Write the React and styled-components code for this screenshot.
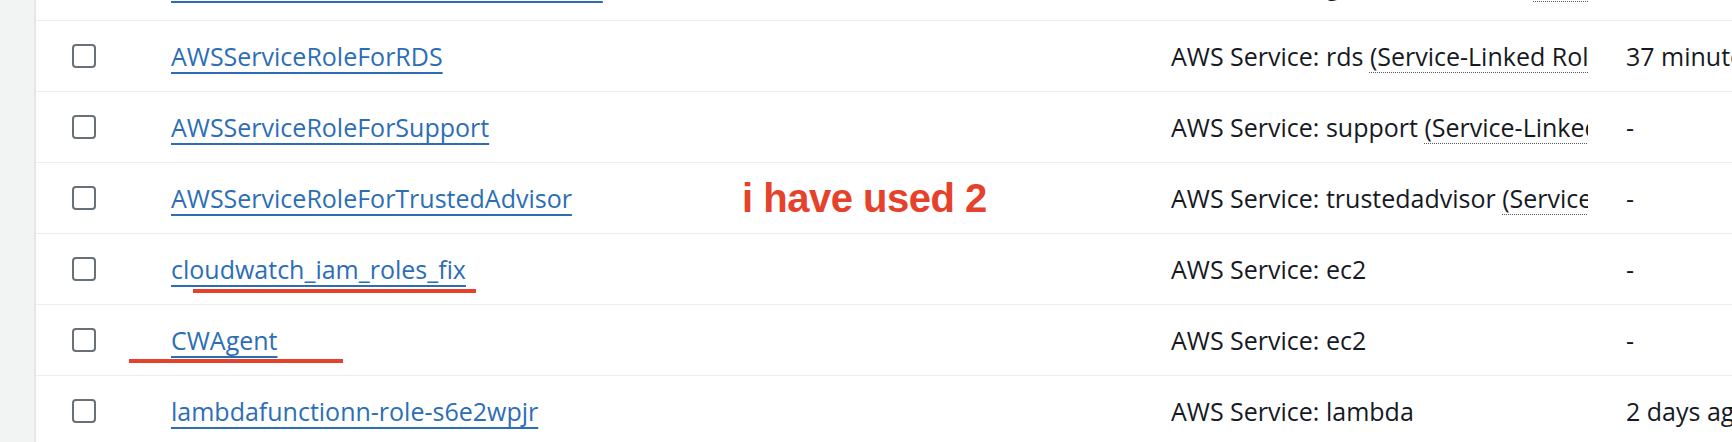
import React from "react";
import styled, { createGlobalStyle } from "styled-components";

const GlobalStyle = createGlobalStyle`
  html, body {
    margin: 0;
    padding: 0;
    background: #ffffff;
    overflow: hidden;
  }
  body {
    font-family: "Open Sans", "Noto Sans", sans-serif;
    color: #16191f;
  }
`;

const Page = styled.div`
  position: relative;
  display: flex;
  width: 1732px;
  height: 442px;
  overflow: hidden;
  background: #ffffff;
`;

const SideRail = styled.div`
  flex: 0 0 34px;
  background: #f2f3f3;
  border-right: 2px solid #e4e7e7;
`;

const Main = styled.div`
  flex: 1;
  min-width: 0;
  overflow: hidden;
`;

const RoleList = styled.div`
  margin-top: -51px;
  display: flex;
  flex-direction: column;
`;

const Row = styled.div`
  display: grid;
  grid-template-columns: 135px 1000px 417px 1fr;
  align-items: center;
  height: 71px;
  box-sizing: border-box;
  border-top: 1px solid #eaeded;
  font-size: 25px;
  line-height: 34px;
`;

const CheckCell = styled.div`
  padding-left: 36px;
  display: flex;
  align-items: center;
`;

const Checkbox = styled.input.attrs({ type: "checkbox" })`
  appearance: none;
  margin: 0;
  width: 24px;
  height: 24px;
  box-sizing: border-box;
  border: 2px solid #687078;
  border-radius: 4px;
  background: #ffffff;
`;

const NameCell = styled.div`
  white-space: nowrap;
`;

const RoleLink = styled.a`
  color: #2c6eb6;
  text-decoration: underline;
  text-decoration-thickness: 2px;
  text-underline-offset: 6px;
  cursor: pointer;
`;

const DescCell = styled.div`
  white-space: nowrap;
  overflow: hidden;
  color: #16191f;
`;

const Linked = styled.span`
  text-decoration: underline dotted #545b64;
  text-decoration-thickness: 1px;
  text-underline-offset: 6px;
`;

const ActivityCell = styled.div`
  padding-left: 38px;
  white-space: nowrap;
  color: #16191f;
`;

const Note = styled.div`
  position: absolute;
  left: 742px;
  top: 178px;
  font-family: "Liberation Sans", Arial, sans-serif;
  font-weight: 700;
  font-size: 40px;
  line-height: 40px;
  letter-spacing: -0.5px;
  color: #e6412b;
  white-space: nowrap;
`;

const Marker = styled.div`
  position: absolute;
  height: 4px;
  background: #e6412b;
`;

const roles = [
  { name: "AWSServiceRoleForGlobalAccelerator", service: "globalaccelerator", linked: true, last: "-" },
  { name: "AWSServiceRoleForRDS", service: "rds", linked: true, last: "37 minutes ago" },
  { name: "AWSServiceRoleForSupport", service: "support", linked: true, last: "-" },
  { name: "AWSServiceRoleForTrustedAdvisor", service: "trustedadvisor", linked: true, last: "-" },
  { name: "cloudwatch_iam_roles_fix", service: "ec2", linked: false, last: "-" },
  { name: "CWAgent", service: "ec2", linked: false, last: "-" },
  { name: "lambdafunctionn-role-s6e2wpjr", service: "lambda", linked: false, last: "2 days ago" },
];

export default function App() {
  return (
    <>
      <GlobalStyle />
      <Page>
        <SideRail />
        <Main>
          <RoleList>
            {roles.map((r) => (
              <Row key={r.name}>
                <CheckCell>
                  <Checkbox aria-label={`Select ${r.name}`} />
                </CheckCell>
                <NameCell>
                  <RoleLink>{r.name}</RoleLink>
                </NameCell>
                <DescCell>
                  AWS Service: {r.service}
                  {r.linked && (
                    <>
                      {" "}
                      <Linked>(Service-Linked Role)</Linked>
                    </>
                  )}
                </DescCell>
                <ActivityCell>{r.last}</ActivityCell>
              </Row>
            ))}
          </RoleList>
        </Main>
        <Note>i have used 2</Note>
        <Marker style={{ left: 193, top: 289, width: 283 }} />
        <Marker style={{ left: 129, top: 359, width: 214 }} />
      </Page>
    </>
  );
}
